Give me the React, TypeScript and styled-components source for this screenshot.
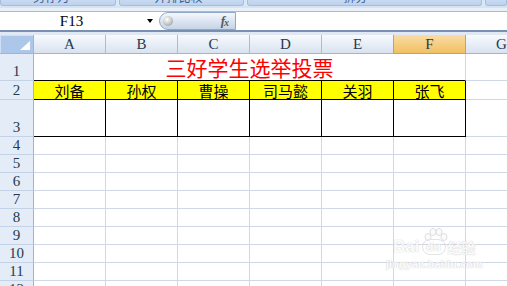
import React, { FC } from 'react'
import styled, { createGlobalStyle } from 'styled-components'

const GlobalStyle = createGlobalStyle`
  html, body {
    margin: 0;
    padding: 0;
  }

  body {
    background-color: white;
    font-family: "Liberation Sans", sans-serif;
  }

  * {
    box-sizing: border-box;
  }
`

const Window = styled.div`
  position: relative;
  display: flex;
  flex-direction: column;

  width: 507px;
  height: 286px;
  overflow: hidden;

  background-color: white;
`

const Ribbon = styled.div`
  display: flex;
  gap: 3px;

  height: 6px;
  flex: none;

  background-color: #dce7f5;
`

const RibbonButton = styled.div<{ $width?: number }>`
  display: flex;
  justify-content: center;
  align-items: flex-end;

  width: ${({ $width }) => ($width ? `${$width}px` : 'auto')};
  flex: ${({ $width }) => ($width ? 'none' : '1')};
  overflow: hidden;

  background: linear-gradient(#c8daf1, #bed2ed);
  border: 1px solid #a4bedf;
  border-top: none;
  border-radius: 0 0 3px 3px;

  color: #3a5d96;
  font-family: "Noto Sans CJK SC", sans-serif;
  font-size: 12px;
  line-height: 12px;
`

const RibbonLabel = styled.span<{ $shift: number }>`
  margin-left: ${({ $shift }) => $shift}px;
  margin-bottom: 2px;
  white-space: nowrap;
`

const Band = styled.div<{ $height: number; $color: string }>`
  height: ${({ $height }) => $height}px;
  flex: none;

  background-color: ${({ $color }) => $color};
`

const FormulaBar = styled.div`
  display: flex;
  align-items: stretch;

  height: 21px;
  flex: none;

  background-color: white;
  border-top: 1px solid #a7bad2;
  border-bottom: 2px solid #7890b2;
`

const NameBox = styled.div`
  display: flex;
  justify-content: center;
  align-items: center;

  width: 143px;

  color: black;
  font-family: "Liberation Serif", serif;
  font-size: 15px;
`

const DropButton = styled.div`
  display: flex;
  justify-content: center;
  align-items: center;

  width: 14px;

  &::after {
    content: '';
    border-left: 3.5px solid transparent;
    border-right: 3.5px solid transparent;
    border-top: 4px solid black;
  }
`

const FxPill = styled.div`
  display: flex;
  justify-content: space-between;
  align-items: center;

  width: 77px;
  margin-left: 2px;
  padding: 0 7px 0 3px;

  background: linear-gradient(#f4f7fb, #dce5f1 50%, #c6d4e7);
  border: 1px solid #8fa8c8;
  border-radius: 9px 0 0 9px;
`

const Ball = styled.div`
  width: 10px;
  height: 10px;

  border-radius: 50%;
  background: radial-gradient(circle at 40% 35%, #ffffff, #cfcfcf 45%, #8c8c8c);
`

const FxLabel = styled.span`
  color: #555b63;
  font-family: "Liberation Serif", serif;
  font-size: 13px;
  font-style: italic;
  font-weight: bold;
  letter-spacing: -1px;

  sub {
    font-size: 10px;
    vertical-align: -1px;
  }
`

const FormulaInput = styled.div`
  flex: 1;
`

const Sheet = styled.div`
  display: grid;
  grid-template-columns: 34px repeat(7, 72px);
  grid-template-rows: 19px 27px 19px 37px repeat(9, 18px);

  width: 538px;
`

const Corner = styled.div`
  display: flex;
  justify-content: flex-end;
  align-items: flex-end;

  padding: 0 3px 3px 0;

  background-color: #adc7eb;
  border-right: 1px solid #9eb6ce;
  border-bottom: 1px solid #9eb6ce;
  box-shadow: inset 1px 1px 0 #cfdff5;
`

const ColHeader = styled.div<{ $active?: boolean }>`
  display: flex;
  justify-content: center;
  align-items: center;

  background: ${({ $active }) =>
    $active
      ? 'linear-gradient(#f9dca6, #f5cd80 55%, #f1c063)'
      : 'linear-gradient(#f8fafd, #e6edf6 55%, #d9e2ee)'};
  border-right: 1px solid ${({ $active }) => ($active ? '#f29536' : '#a9bcd4')};
  border-bottom: 1px solid ${({ $active }) => ($active ? '#f29536' : '#9eb6ce')};
  box-shadow: ${({ $active }) => ($active ? '-1px 0 0 #f29536' : 'none')};

  color: #243a52;
  font-family: "Liberation Serif", serif;
  font-size: 15px;
`

const RowHeader = styled.div`
  display: flex;
  justify-content: center;
  align-items: flex-end;

  padding-bottom: 1px;

  background-color: #e4ecf7;
  border-right: 1px solid #9eb6ce;
  border-bottom: 1px solid #c3d2e4;

  color: #243a52;
  font-family: "Liberation Serif", serif;
  font-size: 15px;
  line-height: 16px;
`

const Cell = styled.div`
  border-right: 1px solid #d0d7e5;
  border-bottom: 1px solid #d0d7e5;
`

const TitleCell = styled.div`
  display: flex;
  justify-content: center;
  align-items: flex-end;

  grid-column: span 6;
  padding-bottom: 2px;

  border-right: 1px solid #d0d7e5;
  border-bottom: 1px solid black;

  color: #ff0000;
  font-family: "Noto Sans CJK SC", sans-serif;
  font-size: 21px;
  line-height: 22px;
`

const TableCell = styled.div<{ $fill?: string }>`
  display: flex;
  justify-content: center;
  align-items: flex-end;

  background-color: ${({ $fill }) => $fill ?? 'white'};
  border-right: 1px solid black;
  border-bottom: 1px solid black;

  color: black;
  font-family: "Noto Sans CJK SC", sans-serif;
  font-size: 15px;
  line-height: 17px;
`

const Watermark = styled.div`
  position: absolute;
  left: 386px;
  top: 228px;

  display: grid;
  justify-items: center;

  width: 94px;
  pointer-events: none;
  opacity: 0.75;

  color: #fbfbfb;
  font-family: "Liberation Sans", sans-serif;
  font-weight: bold;
  text-shadow: 0 0 1px #c4c4c4, 0 0 1px #c4c4c4;
`

const Paw = styled.svg`
  margin: 0 0 -4px 4px;
`

const WatermarkLine = styled.div`
  display: flex;
  align-items: center;
  gap: 2px;

  font-size: 17px;
  line-height: 18px;
`

const DuBadge = styled.span`
  display: inline-flex;
  justify-content: center;
  align-items: center;

  width: 24px;
  height: 16px;

  border: 1px solid #dadada;
  border-radius: 8px;

  font-size: 12px;
`

const JingYan = styled.span`
  font-family: "Noto Sans CJK SC", sans-serif;
  font-size: 14px;
`

const WatermarkUrl = styled.div`
  margin-top: 2px;

  font-size: 11px;
  line-height: 12px;
`

const columns = ['A', 'B', 'C', 'D', 'E', 'F', 'G']
const names = ['刘备', '孙权', '曹操', '司马懿', '关羽', '张飞']
const emptyRows = [4, 5, 6, 7, 8, 9, 10, 11, 12]

const App: FC = () => {
  return (
    <>
      <GlobalStyle />
      <Window>
        <Ribbon>
          <RibbonButton $width={116}>
            <RibbonLabel $shift={-14}>另存为</RibbonLabel>
          </RibbonButton>
          <RibbonButton $width={125}>
            <RibbonLabel $shift={-6}>并排比较</RibbonLabel>
          </RibbonButton>
          <RibbonButton $width={235}>
            <RibbonLabel $shift={-18}>拆分</RibbonLabel>
          </RibbonButton>
          <RibbonButton />
        </Ribbon>
        <Band $height={2} $color="#d6e3f3" />
        <Band $height={3} $color="#eaf0f8" />
        <FormulaBar>
          <NameBox>F13</NameBox>
          <DropButton />
          <FxPill>
            <Ball />
            <FxLabel>
              f<sub>x</sub>
            </FxLabel>
          </FxPill>
          <FormulaInput />
        </FormulaBar>
        <Band $height={3} $color="#dfe8f3" />
        <Sheet>
          <Corner>
            <svg width="10" height="9" viewBox="0 0 10 9">
              <polygon points="10,0 10,9 0,9" fill="white" />
            </svg>
          </Corner>
          {columns.map((column) => (
            <ColHeader key={column} $active={column === 'F'}>
              {column}
            </ColHeader>
          ))}

          <RowHeader>1</RowHeader>
          <TitleCell>三好学生选举投票</TitleCell>
          <Cell />

          <RowHeader>2</RowHeader>
          {names.map((name) => (
            <TableCell key={name} $fill="#ffff00">
              {name}
            </TableCell>
          ))}
          <Cell />

          <RowHeader>3</RowHeader>
          {names.map((name) => (
            <TableCell key={name} />
          ))}
          <Cell />

          {emptyRows.map((row) => (
            <React.Fragment key={row}>
              <RowHeader>{row}</RowHeader>
              {columns.map((column) => (
                <Cell key={column} />
              ))}
            </React.Fragment>
          ))}
        </Sheet>
        <Watermark>
          <Paw width="26" height="14" viewBox="0 0 26 14">
            <g fill="#fafafa" stroke="#d4d4d4" strokeWidth="1">
              <ellipse cx="5" cy="9" rx="3" ry="3.5" />
              <ellipse cx="10" cy="4" rx="3" ry="3.5" />
              <ellipse cx="16" cy="4" rx="3" ry="3.5" />
              <ellipse cx="21" cy="9" rx="3" ry="3.5" />
            </g>
          </Paw>
          <WatermarkLine>
            <span>Bai</span>
            <DuBadge>du</DuBadge>
            <JingYan>经验</JingYan>
          </WatermarkLine>
          <WatermarkUrl>jingyan.baidu.com</WatermarkUrl>
        </Watermark>
      </Window>
    </>
  )
}

export default App
